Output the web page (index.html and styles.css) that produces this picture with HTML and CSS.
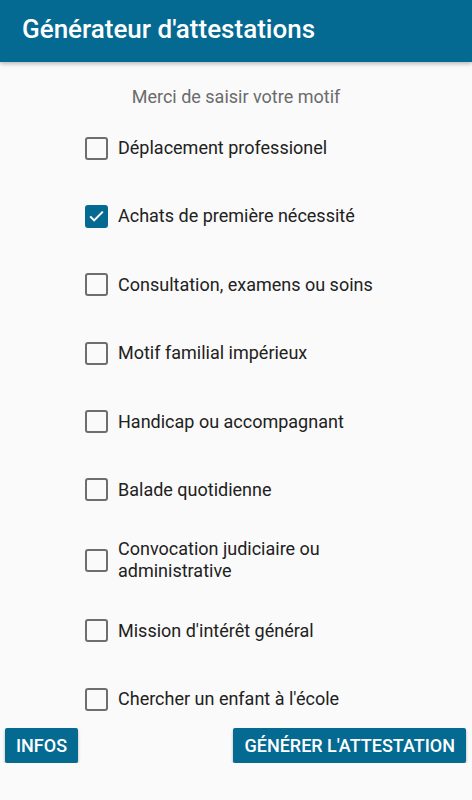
FILE: index.html
```html
<!DOCTYPE html>
<html lang="fr">
  <head>
    <meta charset="UTF-8" />
    <meta name="viewport" content="width=device-width, initial-scale=1.0" />
    <title>Générateur d'attestations</title>
    <link rel="stylesheet" href="styles.css">
  </head>
  <body>
    <header class="app-bar">
      <h1>Générateur d'attestations</h1>
    </header>

    <main class="content">
      <p class="hint">Merci de saisir votre motif</p>

      <ul class="reasons">
        <li class="reason">
          <span class="box"></span>
          <span class="label">Déplacement professionel</span>
        </li>
        <li class="reason">
          <span class="box checked">
            <svg viewBox="0 0 24 24" width="20" height="20"><path d="M4 12.5l5 5 11-11" fill="none" stroke="#fff" stroke-width="2.6" /></svg>
          </span>
          <span class="label">Achats de première nécessité</span>
        </li>
        <li class="reason">
          <span class="box"></span>
          <span class="label">Consultation, examens ou soins</span>
        </li>
        <li class="reason">
          <span class="box"></span>
          <span class="label">Motif familial impérieux</span>
        </li>
        <li class="reason">
          <span class="box"></span>
          <span class="label">Handicap ou accompagnant</span>
        </li>
        <li class="reason">
          <span class="box"></span>
          <span class="label">Balade quotidienne</span>
        </li>
        <li class="reason">
          <span class="box"></span>
          <span class="label">Convocation judiciaire ou administrative</span>
        </li>
        <li class="reason">
          <span class="box"></span>
          <span class="label">Mission d'intérêt général</span>
        </li>
        <li class="reason">
          <span class="box"></span>
          <span class="label">Chercher un enfant à l'école</span>
        </li>
      </ul>

      <div class="actions">
        <button class="btn">Infos</button>
        <button class="btn">Générer l'attestation</button>
      </div>
    </main>
  </body>
</html>
```

FILE: styles.css
```css
* {
  box-sizing: border-box;
  margin: 0;
  padding: 0;
}

body {
  background-color: #fafafa;
  font-family: Roboto, "Noto Sans", sans-serif;
  color: #212121;
}

.app-bar {
  height: 62px;
  background-color: #056a92;
  padding: 0 22px;
  display: flex;
  align-items: center;
  box-shadow: 0 2px 4px rgba(0, 0, 0, 0.25);
}

.app-bar h1 {
  color: #fff;
  font-size: 26px;
  font-weight: 500;
  margin-top: -5px;
}

.content {
  padding-top: 25px;
}

.hint {
  text-align: center;
  color: #6b6b6b;
  font-size: 18px;
  line-height: 20px;
}

.reasons {
  list-style: none;
  width: 304px;
  margin: 17px auto 0;
}

.reason {
  display: flex;
  align-items: center;
  min-height: 48px;
  margin-bottom: 20.4px;
}

.reason:last-child {
  margin-bottom: 5px;
}

.box {
  flex: none;
  width: 23px;
  height: 23px;
  margin-left: 1px;
  border: 2px solid #6e6e6e;
  border-radius: 3px;
  display: flex;
  align-items: center;
  justify-content: center;
}

.box.checked {
  background-color: #056a92;
  border-color: #056a92;
}

.label {
  margin-left: 10px;
  font-size: 18px;
  line-height: 22px;
  padding: 4px 0;
}

.actions {
  display: flex;
  justify-content: space-between;
  padding: 0 6px 0 5px;
}

.btn {
  height: 35px;
  padding: 0 11px;
  background-color: #056a92;
  color: #fff;
  border: none;
  border-radius: 2px;
  font-family: Roboto, "Noto Sans", sans-serif;
  font-size: 18px;
  font-weight: 500;
  text-transform: uppercase;
  box-shadow: 0 2px 3px rgba(0, 0, 0, 0.3);
}
```
